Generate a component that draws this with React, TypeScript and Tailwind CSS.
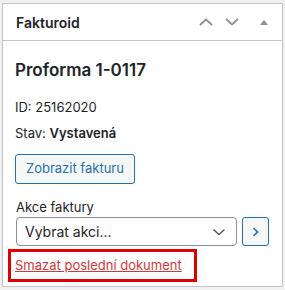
import React from "react";

export default function App() {
  const font = { fontFamily: "Inter, 'Noto Sans', 'Liberation Sans', sans-serif" };
  return (
    <div className="w-[285px] h-[290px] bg-[#f0f0f1] pt-[3px] pl-[2px]" style={font}>
      <div className="w-[281px] h-[284px] bg-white border border-[#c3c4c7] text-[#1d2327]">
        <div className="h-[37px] border-b border-[#c3c4c7] flex items-center pl-[13px] pr-[14px]">
          <div className="text-[14px] font-semibold flex-1">Fakturoid</div>
          <div className="flex items-center">
            <svg width="14" height="8" viewBox="0 0 14 8" className="mr-[12px]">
              <path d="M1 7 L7 1.5 L13 7" fill="none" stroke="#8c8f94" strokeWidth="1.7" />
            </svg>
            <svg width="14" height="8" viewBox="0 0 14 8" className="mr-[21px]">
              <path d="M1 1 L7 6.5 L13 1" fill="none" stroke="#8c8f94" strokeWidth="1.7" />
            </svg>
            <svg width="8" height="5" viewBox="0 0 8 5">
              <path d="M0 5 L4 0 L8 5 Z" fill="#8c8f94" />
            </svg>
          </div>
        </div>
        <div className="pl-[12px] pr-[12px]">
          <div className="mt-[17px] text-[17px] leading-[24px] font-semibold">Proforma 1-0117</div>
          <div className="mt-[15px] text-[13px] leading-[20px]">ID: 25162020</div>
          <div className="mt-[6px] text-[13px] leading-[20px]">
            Stav: <span className="font-semibold">Vystavená</span>
          </div>
          <div className="mt-[11px]">
            <button className="h-[30px] px-[10px] text-[13px] text-[#2271b1] bg-[#f6f7f7] border border-[#2271b1] rounded-[3px]">
              Zobrazit fakturu
            </button>
          </div>
          <div className="mt-[13px] text-[13px] leading-[20px] pl-[1px]">Akce faktury</div>
          <div className="flex items-center ml-[1px]">
            <div className="w-[221px] h-[29px] border border-[#8c8f94] rounded-[4px] flex items-center pl-[8px] pr-[10px]">
              <span className="flex-1 text-[14px]">Vybrat akci...</span>
              <svg width="14" height="8" viewBox="0 0 14 8">
                <path d="M1.5 1.5 L7 6.5 L12.5 1.5" fill="none" stroke="#50575e" strokeWidth="1.4" />
              </svg>
            </div>
            <button className="ml-[5px] w-[27px] h-[29px] bg-[#f6f7f7] border border-[#2271b1] rounded-[3px] flex items-center justify-center">
              <svg width="7" height="10" viewBox="0 0 7 10">
                <path d="M1.5 1 L5.5 5 L1.5 9" fill="none" stroke="#2271b1" strokeWidth="1.6" />
              </svg>
            </button>
          </div>
          <div className="mt-[3px] ml-[-7px] w-[189px] h-[33px] border-[3px] border-[#e00000] flex items-center pl-[4px]">
            <a className="text-[13px] text-[#d63638] underline">Smazat poslední dokument</a>
          </div>
        </div>
      </div>
    </div>
  );
}
